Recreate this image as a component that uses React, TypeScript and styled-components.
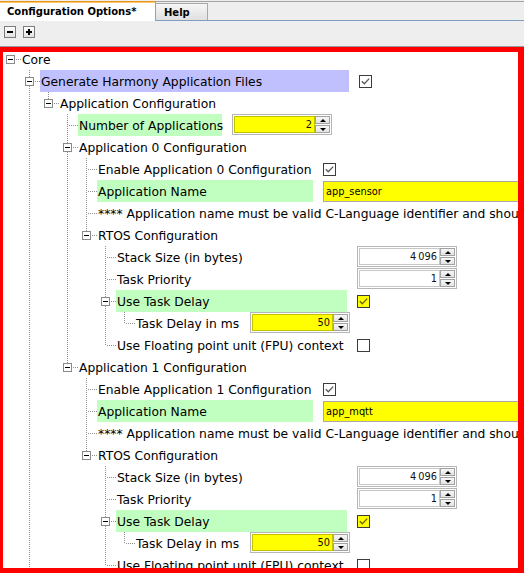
import React from 'react';
import styled, { createGlobalStyle, css } from 'styled-components';

const GlobalStyle = createGlobalStyle`
  html, body { margin: 0; padding: 0; height: 100%; }
  body { background: #eeeeee; font-family: "DejaVu Sans", Verdana, sans-serif; }
  #root { height: 100%; }
`;

const Window = styled.div`
  display: flex;
  flex-direction: column;
  height: 100vh;
  overflow: hidden;
`;

const TabStrip = styled.div`
  display: flex;
  align-items: flex-end;
  flex: none;
  margin-top: 1px;
  height: 18px;
  border-top: 1px solid #a4a4a4;
  border-bottom: 1px solid #7f9fbd;
  background: #eeeeee;
`;

const Tab = styled.div<{ $active?: boolean }>`
  box-sizing: border-box;
  flex: none;
  font: bold 10px/11px "DejaVu Sans", Verdana, sans-serif;
  color: #000;
  white-space: nowrap;
  ${(p) =>
    p.$active
      ? css`
          width: 156px;
          height: 20px;
          margin: -1px 0 -1px 0;
          padding: 5px 0 0 7px;
          background: #ffffff;
          border-right: 1px solid #a0a0a0;
          box-shadow: inset 0 1px 0 #e8951e, inset 0 2px 0 #ffc86a;
        `
      : css`
          width: 52px;
          height: 17px;
          padding: 3px 0 0 8px;
          background: linear-gradient(#f6f6f6, #e0e0e0);
          border-top: 1px solid #a8a8a8;
          border-right: 1px solid #a8a8a8;
        `}
`;

const Toolbar = styled.div`
  display: flex;
  flex: none;
  gap: 7px;
  height: 20px;
  padding: 5px 0 0 4px;
  border-bottom: 1px solid #9a9a9a;
  background: #eeeeee;
`;

const ToolButton = styled.div<{ $plus?: boolean }>`
  position: relative;
  box-sizing: border-box;
  width: 12px;
  height: 12px;
  border: 1px solid #7c7c7c;
  background: linear-gradient(#ffffff, #e2e2e2);
  &::before {
    content: '';
    position: absolute;
    left: 2px;
    top: 4px;
    width: 6px;
    height: 2px;
    background: #000;
  }
  ${(p) =>
    p.$plus &&
    css`
      &::after {
        content: '';
        position: absolute;
        left: 4px;
        top: 2px;
        width: 2px;
        height: 6px;
        background: #000;
      }
    `}
`;

const Panel = styled.div`
  position: relative;
  flex: 1;
  overflow: hidden;
  background: #ffffff;
  padding-top: 1px;
  &::after {
    content: '';
    position: absolute;
    inset: 0;
    border-style: solid;
    border-color: #ff0000;
    border-width: 5px 6px 5px 3px;
    pointer-events: none;
  }
`;

const Row = styled.div`
  display: flex;
  height: 22px;
  padding-left: 1px;
  white-space: nowrap;
`;

const Guide = styled.div`
  position: relative;
  flex: none;
  width: 19px;
  height: 22px;
`;

const Connector = styled.div`
  position: relative;
  flex: none;
  width: 20px;
  height: 22px;
`;

const VLine = styled.span<{ $top: number; $height: number }>`
  position: absolute;
  left: 9px;
  top: ${(p) => p.$top}px;
  width: 1px;
  height: ${(p) => p.$height}px;
  background: repeating-linear-gradient(to bottom, #8e8e8e 0 1px, transparent 1px 2px);
`;

const HLine = styled.span`
  position: absolute;
  left: 10px;
  top: 11px;
  width: 10px;
  height: 1px;
  background: repeating-linear-gradient(to right, transparent 0 1px, #8e8e8e 1px 2px);
`;

const Expander = styled.span`
  position: absolute;
  left: 5px;
  top: 7px;
  box-sizing: border-box;
  width: 9px;
  height: 9px;
  border: 1px solid #8a8a8a;
  background: #ffffff;
  &::after {
    content: '';
    position: absolute;
    left: 1px;
    top: 3px;
    width: 5px;
    height: 1px;
    background: #000;
  }
`;

const BG: Record<string, string> = { blue: '#c0c0ff', green: '#c0ffc0' };

const Label = styled.div<{ $bg?: string; $w?: number }>`
  flex: none;
  box-sizing: border-box;
  height: 22px;
  padding: 2px 0 0 1px;
  font-size: 12.3px;
  line-height: 20px;
  color: #000;
  background: ${(p) => (p.$bg ? BG[p.$bg] : 'transparent')};
  width: ${(p) => (p.$w ? `${p.$w}px` : 'auto')};
`;

const ValueSlot = styled.div`
  flex: none;
  display: flex;
  align-items: flex-start;
  margin-left: 10px;
`;

const CheckBox = styled.div<{ $yellow?: boolean }>`
  box-sizing: border-box;
  width: 13px;
  height: 13px;
  margin-top: 5px;
  border: 1px solid #3c3c3c;
  background: ${(p) => (p.$yellow ? '#ffff00' : '#ffffff')};
  display: flex;
  align-items: center;
  justify-content: center;
`;

const Spinner = styled.div`
  box-sizing: border-box;
  display: flex;
  width: 100px;
  height: 21px;
  padding: 1px;
  border: 1px solid #b6b6b6;
  background: #ffffff;
`;

const SpinField = styled.div<{ $yellow?: boolean }>`
  flex: 1;
  box-sizing: border-box;
  padding: 1px 3px 0 0;
  text-align: right;
  font-size: 9.8px;
  line-height: 16px;
  color: #111;
  background: ${(p) => (p.$yellow ? '#ffff00' : '#ffffff')};
  box-shadow: inset 0 0 0 1px ${(p) => (p.$yellow ? 'rgba(80,80,0,0.35)' : 'rgba(0,0,0,0.22)')};
`;

const SpinButtons = styled.div`
  display: flex;
  flex-direction: column;
  gap: 1px;
  width: 15px;
`;

const SpinButton = styled.div<{ $down?: boolean }>`
  box-sizing: border-box;
  height: 8px;
  border: 1px solid #a2a2a2;
  background: linear-gradient(#f7f7f7, #e3e3e3);
  display: flex;
  align-items: center;
  justify-content: center;
  &::after {
    content: '';
    width: 0;
    height: 0;
    border-left: 3px solid transparent;
    border-right: 3px solid transparent;
    ${(p) =>
      p.$down
        ? css`border-top: 3px solid #000;`
        : css`border-bottom: 3px solid #000;`}
  }
`;

const TextInput = styled.div`
  box-sizing: border-box;
  width: 220px;
  height: 21px;
  margin-top: 1px;
  padding-left: 2px;
  border: 1px solid #a8a8a8;
  background: #ffff00;
  font-size: 9.8px;
  line-height: 19px;
  color: #000;
`;

type Value =
  | { kind: 'check'; checked: boolean; yellow?: boolean }
  | { kind: 'spin'; text: string; yellow?: boolean }
  | { kind: 'text'; text: string };

type Node = {
  label: string;
  bg?: 'blue' | 'green';
  lw?: number;
  value?: Value;
  more?: boolean;
  children?: Node[];
};

const appConfig = (n: number, name: string): Node => ({
  label: `Application ${n} Configuration`,
  children: [
    { label: `Enable Application ${n} Configuration`, lw: 216, value: { kind: 'check', checked: true } },
    { label: 'Application Name', bg: 'green', lw: 216, value: { kind: 'text', text: name } },
    { label: '**** Application name must be valid C-Language identifier and should be unique ****' },
    {
      label: 'RTOS Configuration',
      children: [
        { label: 'Stack Size (in bytes)', lw: 231, value: { kind: 'spin', text: '4\u202F096' } },
        { label: 'Task Priority', lw: 231, value: { kind: 'spin', text: '1' } },
        {
          label: 'Use Task Delay',
          bg: 'green',
          lw: 231,
          value: { kind: 'check', checked: true, yellow: true },
          children: [{ label: 'Task Delay in ms', lw: 105, value: { kind: 'spin', text: '50', yellow: true } }],
        },
        { label: 'Use Floating point unit (FPU) context', lw: 231, value: { kind: 'check', checked: false } },
      ],
    },
  ],
});

const tree: Node = {
  label: 'Core',
  children: [
    {
      label: 'Generate Harmony Application Files',
      bg: 'blue',
      lw: 309,
      more: true,
      value: { kind: 'check', checked: true },
      children: [
        {
          label: 'Application Configuration',
          children: [
            { label: 'Number of Applications', bg: 'green', lw: 144, value: { kind: 'spin', text: '2', yellow: true } },
            appConfig(0, 'app_sensor'),
            appConfig(1, 'app_mqtt'),
          ],
        },
      ],
    },
  ],
};

type Flat = { node: Node; level: number; guides: boolean[]; down: boolean };

const flatten = (node: Node, level: number, guides: boolean[], hasNext: boolean, out: Flat[]) => {
  out.push({ node, level, guides, down: hasNext });
  const kids = node.children ?? [];
  kids.forEach((k, i) => {
    const next = i < kids.length - 1 || !!k.more;
    flatten(k, level + 1, [...guides, hasNext], next, out);
  });
  return out;
};

const rows = flatten(tree, 0, [], false, []);

const Check: React.FC<{ color: string }> = ({ color }) => (
  <svg width="11" height="11" viewBox="0 0 11 11">
    <polyline points="1.8,5.2 4.3,7.8 9.2,2.6" fill="none" stroke={color} strokeWidth="1.3" />
  </svg>
);

const ValueView: React.FC<{ v: Value }> = ({ v }) => {
  if (v.kind === 'check')
    return (
      <CheckBox $yellow={v.yellow}>{v.checked && <Check color={v.yellow ? '#6c6400' : '#5a5a5a'} />}</CheckBox>
    );
  if (v.kind === 'spin')
    return (
      <Spinner>
        <SpinField $yellow={v.yellow}>{v.text}</SpinField>
        <SpinButtons>
          <SpinButton />
          <SpinButton $down />
        </SpinButtons>
      </Spinner>
    );
  return <TextInput>{v.text}</TextInput>;
};

export default function App() {
  return (
    <>
      <GlobalStyle />
      <Window>
        <TabStrip>
          <Tab $active>Configuration Options*</Tab>
          <Tab>Help</Tab>
        </TabStrip>
        <Toolbar>
          <ToolButton />
          <ToolButton $plus />
        </Toolbar>
        <Panel>
          {rows.map((r, i) => (
            <Row key={i}>
              {r.guides.map((g, k) => (
                <Guide key={k}>{g && <VLine $top={0} $height={22} />}</Guide>
              ))}
              <Connector>
                {r.level > 0 && <VLine $top={0} $height={r.down ? 22 : 12} />}
                <HLine />
                {r.node.children && <Expander />}
              </Connector>
              <Label $bg={r.node.bg} $w={r.node.lw}>
                {r.node.label}
              </Label>
              {r.node.value && (
                <ValueSlot>
                  <ValueView v={r.node.value} />
                </ValueSlot>
              )}
            </Row>
          ))}
        </Panel>
      </Window>
    </>
  );
}
